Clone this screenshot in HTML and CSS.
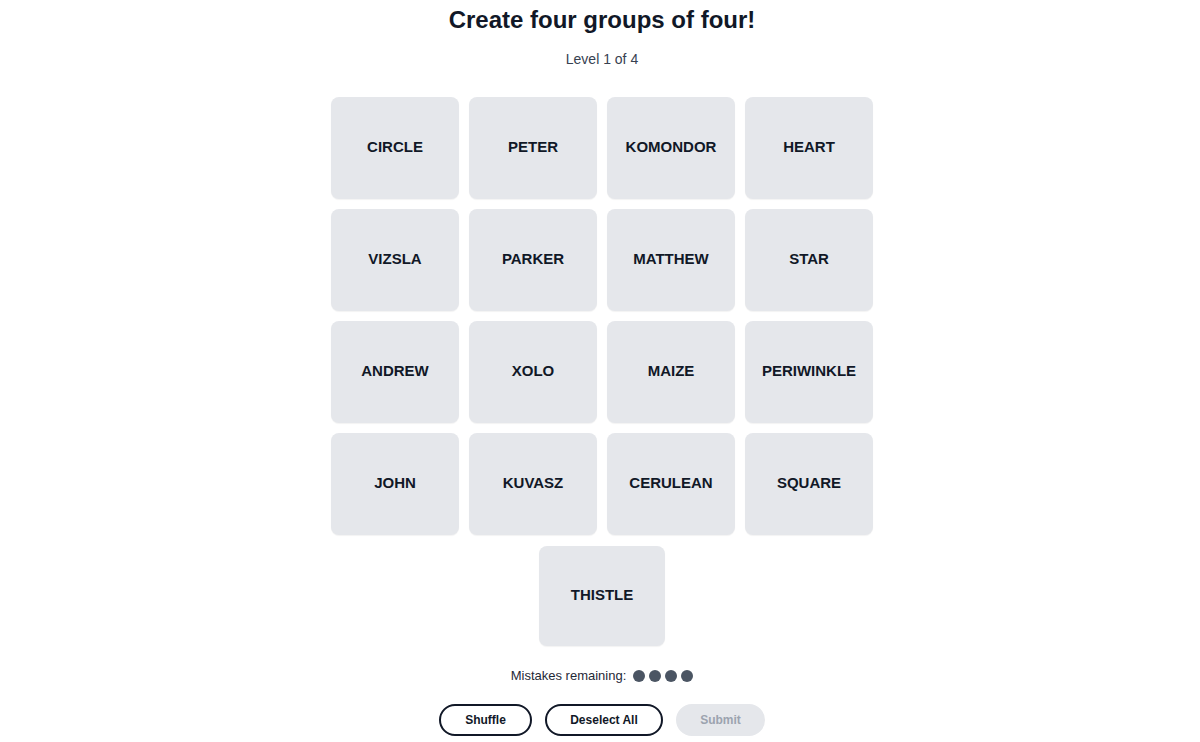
FILE: index.html
```html
<!DOCTYPE html>
<html>
<head>
<meta charset="utf-8">
<link rel="stylesheet" href="styles.css">
</head>
<body>
<main class="game">
  <h1 class="title">Create four groups of four!</h1>
  <p class="level">Level 1 of 4</p>
  <div class="grid">
    <button class="tile">CIRCLE</button>
    <button class="tile">PETER</button>
    <button class="tile">KOMONDOR</button>
    <button class="tile">HEART</button>
    <button class="tile">VIZSLA</button>
    <button class="tile">PARKER</button>
    <button class="tile">MATTHEW</button>
    <button class="tile">STAR</button>
    <button class="tile">ANDREW</button>
    <button class="tile">XOLO</button>
    <button class="tile">MAIZE</button>
    <button class="tile">PERIWINKLE</button>
    <button class="tile">JOHN</button>
    <button class="tile">KUVASZ</button>
    <button class="tile">CERULEAN</button>
    <button class="tile">SQUARE</button>
  </div>
  <div class="extra">
    <button class="tile tile-small">THISTLE</button>
  </div>
  <div class="mistakes">
    <span>Mistakes remaining:</span>
    <span class="dots"><i class="dot"></i><i class="dot"></i><i class="dot"></i><i class="dot"></i></span>
  </div>
  <div class="actions">
    <button class="btn btn-shuffle">Shuffle</button>
    <button class="btn btn-deselect">Deselect All</button>
    <button class="btn btn-submit" disabled>Submit</button>
  </div>
</main>
</body>
</html>
```
FILE: styles.css
```css
* { box-sizing: border-box; }
html, body { margin: 0; padding: 0; background: #ffffff; }
body {
  font-family: "Liberation Sans", Arial, sans-serif;
  color: #111827;
}
.game {
  display: flex;
  flex-direction: column;
  align-items: center;
  padding-top: 4px;
  padding-left: 4px;
}
.title {
  margin: 0;
  font-size: 24px;
  line-height: 32px;
  font-weight: 700;
  color: #111827;
}
.level {
  margin: 13px 0 0;
  font-size: 14px;
  line-height: 20px;
  color: #374151;
}
.grid {
  margin-top: 28px;
  display: grid;
  grid-template-columns: repeat(4, 128px);
  grid-auto-rows: 102px;
  gap: 10px;
}
.tile {
  border: none;
  background: #e5e7eb;
  border-radius: 8px;
  font-family: "Liberation Sans", Arial, sans-serif;
  font-size: 15px;
  font-weight: 700;
  color: #111827;
  box-shadow: 0 1px 1px rgba(0,0,0,0.05);
  padding: 0 0 4px;
  cursor: pointer;
}
.extra {
  margin-top: 11px;
  display: flex;
  justify-content: center;
}
.tile-small {
  width: 126px;
  height: 100px;
}
.mistakes {
  margin-top: 22px;
  display: flex;
  align-items: center;
  gap: 7px;
  font-size: 13px;
  line-height: 16px;
  color: #1f2937;
}
.dots { display: flex; gap: 4px; }
.dot {
  display: block;
  width: 12px;
  height: 12px;
  border-radius: 50%;
  background: #4b5563;
}
.actions {
  margin-top: 20px;
  display: flex;
  gap: 13px;
}
.btn {
  height: 32px;
  border-radius: 16px;
  border: 2px solid #111827;
  background: #ffffff;
  font-family: "Liberation Sans", Arial, sans-serif;
  font-size: 12px;
  font-weight: 700;
  color: #111827;
  padding: 0;
}
.btn-shuffle { width: 93px; }
.btn-deselect { width: 118px; }
.btn-submit {
  width: 89px;
  border-color: #e5e7eb;
  background: #e5e7eb;
  color: #9ca3af;
}
```
